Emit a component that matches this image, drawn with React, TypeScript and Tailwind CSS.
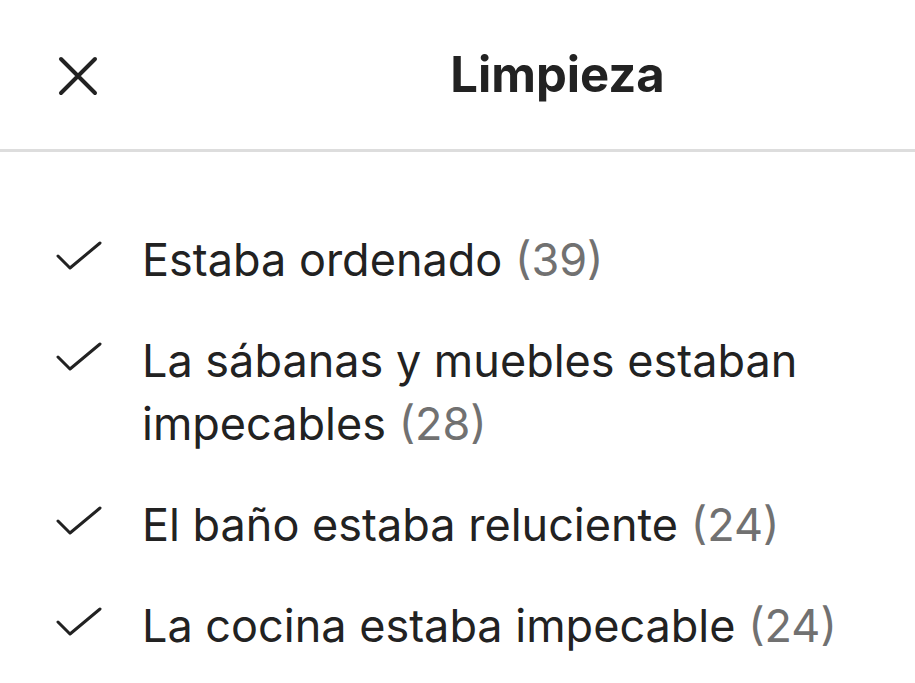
const items: { label: string; count: number }[] = [
  { label: "Estaba ordenado", count: 39 },
  { label: "La sábanas y muebles estaban impecables", count: 28 },
  { label: "El baño estaba reluciente", count: 24 },
  { label: "La cocina estaba impecable", count: 24 },
];

function Check() {
  return (
    <svg width="46" height="32" viewBox="0 0 46 32" fill="none" className="shrink-0 mt-[12px]">
      <path d="M2 16 L14 28 L44 3" stroke="#222" strokeWidth="3" strokeLinecap="round" strokeLinejoin="round" />
    </svg>
  );
}

function CloseIcon() {
  return (
    <svg width="40" height="40" viewBox="0 0 40 40" fill="none">
      <path d="M3 3 L37 37 M37 3 L3 37" stroke="#222" strokeWidth="4" strokeLinecap="round" />
    </svg>
  );
}

export default function App() {
  return (
    <div className="w-[915px] h-[683px] bg-white overflow-hidden font-['Inter',sans-serif] text-[#222]">
      {/* header */}
      <div className="relative h-[152px] flex items-center border-b-[3px] border-[#dddddd]">
        <button className="absolute left-[58px] top-[56px]">
          <CloseIcon />
        </button>
        <h1 className="w-full pl-[200px] text-center text-[49px] font-bold">Limpieza</h1>
      </div>

      <ul className="pl-[56px] pr-6 pt-[76px] flex flex-col gap-[38px]">
        {items.map((item) => (
          <li key={item.label} className="flex items-start gap-[40px]">
            <Check />
            <span className="text-[45px] leading-[63px] max-w-[710px]">
              {item.label} <span className="text-[#717171]">({item.count})</span>
            </span>
          </li>
        ))}
      </ul>
    </div>
  );
}
